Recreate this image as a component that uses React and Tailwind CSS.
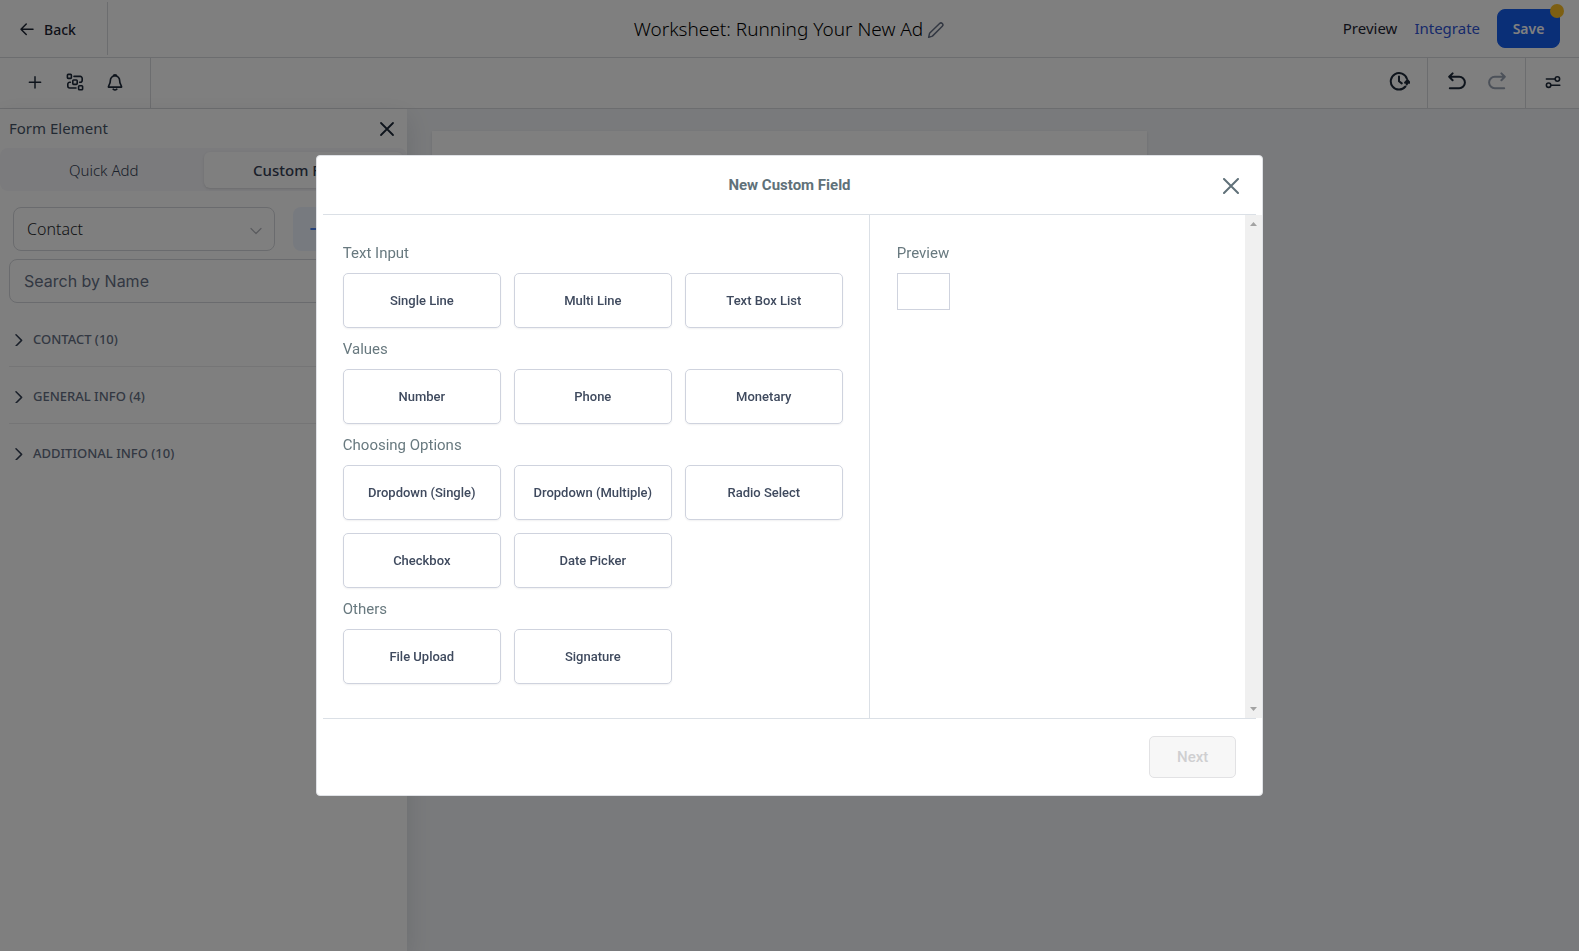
import React from "react";

const SANS = "font-['Noto_Sans',sans-serif]";

function Icon({ className, box = "0 0 24 24", width = 2, children }) {
  return (
    <svg
      className={className}
      viewBox={box}
      fill="none"
      stroke="currentColor"
      strokeWidth={width}
      strokeLinecap="round"
      strokeLinejoin="round"
      aria-hidden="true"
    >
      {children}
    </svg>
  );
}

function IconButton({ label, className = "", children }) {
  return (
    <button type="button" aria-label={label} className={`flex size-10 items-center justify-center ${className}`}>
      {children}
    </button>
  );
}

function TopBar() {
  return (
    <header className="flex h-[58px] items-center justify-between border-b border-[#d9dade] bg-white">
      <div className="flex h-[53px] flex-1">
        <div className="flex w-[108px] items-center border-r border-[#d9dade] pt-0.5 pl-[18px]">
          <button type="button" className="flex items-center gap-2 text-[14px] font-medium text-[#1d2433]">
            <Icon className="size-[18px]">
              <path d="M20 11H4M11 4l-7 7 7 7" />
            </Icon>
            Back
          </button>
        </div>
      </div>
      <div className="flex items-center gap-1 pt-0.5">
        <h1 className="text-[19px] font-light text-black">Worksheet: Running Your New Ad</h1>
        <button type="button" aria-label="Rename" className="text-[#667085]">
          <Icon className="size-[18px]" width={2}>
            <path d="M16.800 3.400a2.500 2.500 0 0 1 3.600 3.600L7.200 20.200 2.200 21.800l1.200-5.400z" />
          </Icon>
        </button>
      </div>
      <div className="flex-1">
        <div className="flex items-center justify-end gap-[17px] pr-[19px] text-[15px]">
          <a href="#preview" className="text-[#1d2433]">Preview</a>
          <a href="#integrate" className="text-[#2f54d6]">Integrate</a>
          <button
            type="button"
            className="relative h-[39px] w-[63px] rounded-lg border border-[#155eef] bg-[#155eef] text-[14px] font-semibold text-white"
          >
            Save
            <span className="absolute -top-[6px] -right-[5px] size-[14px] rounded-full bg-[#fbbf24]" />
          </button>
        </div>
      </div>
    </header>
  );
}

function ToolBar() {
  return (
    <div className="flex h-[51px] justify-between border-b border-[#d9dade] bg-white text-[#1d2939]">
      <div className="flex w-[151px] items-center border-r border-[#d9dade] pb-0.5 pl-[15px]">
        <IconButton label="Add element">
          <Icon className="size-4" width={2.2}>
            <path d="M12 4v17M3.500 12.500h17" />
          </Icon>
        </IconButton>
        <IconButton label="Form structure">
          <Icon className="size-[18px]" box="0 0 18 18" width={1.6}>
            <rect x="1.4" y="1.4" width="4" height="4" rx="0.8" />
            <rect x="6.8" y="7" width="4.4" height="4.4" rx="0.8" />
            <rect x="12.6" y="12.8" width="4" height="4" rx="0.8" />
            <path d="M8 3.400h6.200a2 2 0 0 1 2 2v1.800a2 2 0 0 1-2 2H13.600M10 15H3.800a2 2 0 0 1-2-2v-1.800a2 2 0 0 1 2-2H4.400" />
          </Icon>
        </IconButton>
        <IconButton label="Notifications">
          <Icon className="size-[18px]" width={2.2}>
            <path d="M9.400 4.400a2.700 2.700 0 0 1 5.200 0M12 3.600a6.400 6.400 0 0 1 6.200 6.600c0 4.600 2.600 6 2.600 8.600H3.200c0-2.600 2.600-4 2.600-8.600A6.400 6.400 0 0 1 12 3.600M9.600 21.600a3.600 3.600 0 0 0 4.800 0" />
          </Icon>
        </IconButton>
      </div>
      <div className="flex">
        <div className="flex items-center border-r border-[#d9dade] pr-2 pb-1">
          <IconButton label="Version history">
            <Icon className="size-[22px]" width={2.2}>
              <path d="M19 18A9 9 0 1 1 20.600 9.600M12 7v5.200l3 2.400M18.600 13.800l2.600-2.800 2.300 2.800zM21.200 12c0 1.400-.2 2.600-.7 3.800" />
            </Icon>
          </IconButton>
        </div>
        <div className="flex items-center border-r border-[#d9dade] pr-2 pb-1 pl-[9px]">
          <IconButton label="Undo">
            <Icon className="size-[18px]" box="0 0 18 18" width={2}>
              <path d="M4.600 1.400 1.200 4.800l3.400 3.400M1.400 4.800h9.800a5.600 5.600 0 0 1 0 11.400H1.800" />
            </Icon>
          </IconButton>
          <IconButton label="Redo" className="text-[#98a2b3]">
            <Icon className="size-[18px]" box="0 0 18 18" width={2}>
              <path d="m13.400 1.400 3.400 3.400-3.400 3.400M16.600 4.800H6.800a5.600 5.600 0 0 0 0 11.400h9.400" />
            </Icon>
          </IconButton>
        </div>
        <div className="flex w-[53px] items-center justify-center pb-0.5">
          <IconButton label="Settings">
            <Icon className="size-4" box="0 0 16 16" width={1.6}>
              <path d="M1.400 5h8.400M6.200 11.200h8.600" />
              <circle cx="12.400" cy="5" r="2.200" />
              <circle cx="3.600" cy="11.200" r="2.200" />
            </Icon>
          </IconButton>
        </div>
      </div>
    </div>
  );
}

const GROUPS = ["CONTACT (10)", "GENERAL INFO (4)", "ADDITIONAL INFO (10)"];

function ElementPanel() {
  return (
    <aside className="w-[407px] shrink-0 bg-white shadow-[0_8px_24px_rgba(16,24,40,0.12)]">
      <div className="flex h-[39px] items-center justify-between pr-3 pl-[9px]">
        <h2 className="text-[15px] text-[#475467]">Form Element</h2>
        <button type="button" aria-label="Close panel" className="text-[#1d2939]">
          <Icon className="size-4" box="0 0 16 16" width={1.8}>
            <path d="M2 2l12 12M14 2 2 14" />
          </Icon>
        </button>
      </div>
      <div className="flex h-[43px] rounded-lg bg-[#f6f6fa] px-1 pt-1 pb-[3px] text-[15px]">
        <button type="button" className="flex-1 pt-px font-light text-[#344054]">Quick Add</button>
        <button type="button" className="flex-1 rounded-md bg-white pt-px font-medium text-[#344054] shadow-sm">
          Custom Fields
        </button>
      </div>
      <div className="flex gap-[18px] pt-4 pr-[9px] pl-[13px]">
        <div className="relative w-[262px]">
          <select
            aria-label="Field group"
            className="h-11 w-full appearance-none rounded-lg border border-[#d5d7dc] bg-white px-[13px] text-[16px] font-light text-[#26282c]"
          >
            <option>Contact</option>
          </select>
          <Icon className="pointer-events-none absolute top-[18px] right-[13px] size-3 text-[#b4b6bc]" box="0 0 12 12" width={1.2}>
            <path d="m1 3.500 5 5 5-5" />
          </Icon>
        </div>
        <button
          type="button"
          aria-label="Add custom field"
          className="flex h-11 flex-1 items-center rounded-lg bg-[#eff4ff] pl-[17px] text-[#155eef]"
        >
          <Icon className="size-4" box="0 0 16 16" width={1.6}>
            <path d="M8 1v14M1 8h14" />
          </Icon>
        </button>
      </div>
      <div className="px-[9px] pt-2">
        <input
          type="text"
          aria-label="Search by Name"
          placeholder="Search by Name"
          className="h-11 w-full rounded-lg border border-[#d5d7dc] bg-white px-[14px] font-['Inter',sans-serif] text-[16px] placeholder:text-[#667085]"
        />
        <ul className="pt-[7px]">
          {GROUPS.map((name) => (
            <li key={name} className="border-b border-[#eaeaec] last:border-b-0">
              <button
                type="button"
                className="flex h-14 w-full items-center gap-2 pt-1 pl-1 text-[13px] font-medium text-[#667085]"
              >
                <Icon className="size-3 text-[#344054]" box="0 0 12 12" width={1.5}>
                  <path d="m3 .8 5.600 5.600L3 12" />
                </Icon>
                {name}
              </button>
            </li>
          ))}
        </ul>
      </div>
    </aside>
  );
}

const SECTIONS = [
  { title: "Text Input", fields: ["Single Line", "Multi Line", "Text Box List"] },
  { title: "Values", fields: ["Number", "Phone", "Monetary"] },
  {
    title: "Choosing Options",
    fields: ["Dropdown (Single)", "Dropdown (Multiple)", "Radio Select", "Checkbox", "Date Picker"],
  },
  { title: "Others", fields: ["File Upload", "Signature"] },
];

function CustomFieldDialog() {
  return (
    <div className="fixed inset-0 flex items-center justify-center bg-black/50">
      <section
        role="dialog"
        aria-modal="true"
        aria-labelledby="dialog-title"
        className="w-[60%] min-w-[900px] rounded border border-[#e0e2e6] bg-white font-['Roboto',sans-serif]"
      >
        <div className="px-[6px]">
          <div className="flex h-[59px] items-center justify-between border-b border-[#dbe0e6] pt-0.5 pr-[13px] pl-[37px]">
            <h2 id="dialog-title" className="flex-1 pb-0.5 text-center text-[15px] font-bold text-[#607179]">
              New Custom Field
            </h2>
            <button type="button" aria-label="Close" className="flex size-6 items-center justify-center text-[#607179]">
              <Icon className="size-4" box="0 0 16 16" width={2}>
                <path d="M1 1l14 14M15 1 1 15" />
              </Icon>
            </button>
          </div>
        </div>
        <div className="flex">
          <div className="w-[553px] border-r border-[#dbe0e6] pt-[17px] pb-[34px] pl-[26px]">
            {SECTIONS.map((section) => (
              <div key={section.title} className="pt-[9px]">
                <h3 className="text-[15px] leading-6 text-[#68797f]">{section.title}</h3>
                <div className="mt-2 grid grid-cols-[repeat(3,158px)] gap-[13px]">
                  {section.fields.map((field) => (
                    <button
                      key={field}
                      type="button"
                      className="h-[55px] rounded-[5px] border border-[#cfd3de] bg-white text-[13px] font-medium text-[#3f4a5e] shadow-[0_1px_2px_rgba(16,24,40,0.06)]"
                    >
                      {field}
                    </button>
                  ))}
                </div>
              </div>
            ))}
          </div>
          <div className="flex-1 px-[27px] pt-[26px]">
            <h3 className="text-[15px] leading-6 text-[#68797f]">Preview</h3>
            <div className="mt-2 h-[37px] w-[53px] border border-[#cfd3de]" />
          </div>
          <div className="flex w-[17px] flex-col items-center justify-between bg-[#f0f0f0] py-[7px] text-[#a3a3a3]">
            <svg className="h-1 w-[7px]" viewBox="0 0 7 4" fill="currentColor" aria-hidden="true">
              <path d="M0 4 3.500 0 7 4z" />
            </svg>
            <svg className="h-1 w-[7px]" viewBox="0 0 7 4" fill="currentColor" aria-hidden="true">
              <path d="M0 0h7L3.500 4z" />
            </svg>
          </div>
        </div>
        <div className="px-[6px]">
          <div className="flex h-[77px] items-center justify-end border-t border-[#dbe0e6] pr-5">
            <button
              type="button"
              disabled
              className="h-[42px] w-[87px] rounded-[5px] border border-[#e2e2e4] bg-[#f7f7f7] text-[15px] font-medium text-[#cfcfd1]"
            >
              Next
            </button>
          </div>
        </div>
      </section>
    </div>
  );
}

export default function App() {
  return (
    <div className={`flex min-h-screen flex-col bg-[#f3f5f8] ${SANS}`}>
      <TopBar />
      <ToolBar />
      <main className="flex flex-1">
        <ElementPanel />
        <div className="flex-1 px-[25px] pt-[22px]">
          <div className="h-[500px] max-w-[715px] bg-white shadow-sm" />
        </div>
      </main>
      <CustomFieldDialog />
    </div>
  );
}
